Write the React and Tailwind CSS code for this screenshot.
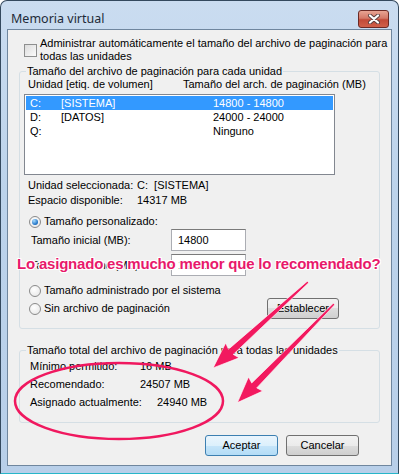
import React from 'react';

const Radio = ({ checked }) => (
  <span className="w-[12px] h-[12px] rounded-full border border-[#8a8a8a] bg-[radial-gradient(circle_at_40%_35%,#ffffff,#e4e4e4)] flex items-center justify-center shrink-0">
    {checked && (
      <span className="w-[6px] h-[6px] rounded-full bg-[radial-gradient(circle_at_35%_30%,#a8dcff,#1a6fc4_70%,#0d4f99)]" />
    )}
  </span>
);

const Button = ({ children, primary, className = '' }) => (
  <button
    className={
      'h-[21px] rounded-[3px] border text-black flex items-center justify-center ' +
      (primary
        ? 'border-[#3c7fb1] bg-[linear-gradient(to_bottom,#eaf5fd_0%,#dcf0fc_50%,#c6e5fa_50%,#b3dcf6_100%)] '
        : 'border-[#707070] bg-[linear-gradient(to_bottom,#f2f2f2_0%,#ebebeb_50%,#dddddd_50%,#cfcfcf_100%)] ') +
      className
    }
  >
    {children}
  </button>
);

const drives = [
  { unit: 'C:', label: '[SISTEMA]', size: '14800 - 14800', selected: true },
  { unit: 'D:', label: '[DATOS]', size: '24000 - 24000' },
  { unit: 'Q:', label: '', size: 'Ninguno' },
];

export default function App() {
  return (
    <div className="relative w-[399px] h-[474px] overflow-hidden bg-white text-[11px] leading-[13px] text-black whitespace-nowrap font-['Liberation_Sans',sans-serif]">
      {/* Window frame */}
      <div className="h-full flex flex-col rounded-t-[7px] border border-[#34495e] border-b-[#27b6c9] bg-[linear-gradient(to_bottom,#cadcf0,#bcd3eb_40%,#b8cfe9)] px-[6px] pb-[7px]">
        {/* Title bar */}
        <div className="h-[28px] flex items-start justify-between shrink-0">
          <span className="pl-[4px] pt-[11px] text-[12.5px] leading-[14px] text-[#1e2a38] font-['Noto_Sans',sans-serif]">Memoria virtual</span>
          <div className="mt-[9px] mr-[3px] w-[31px] h-[18px] rounded-[3px] border border-[#6b2a25] bg-[linear-gradient(to_bottom,#e8a493_0%,#d47968_45%,#c24a38_55%,#d0604a_100%)] flex items-center justify-center">
            <svg width="14" height="10" viewBox="0 0 14 10">
              <path d="M3 1.5 L11 8.5 M11 1.5 L3 8.5" stroke="#5a4040" strokeWidth="4" strokeLinecap="round" />
              <path d="M3 1.5 L11 8.5 M11 1.5 L3 8.5" stroke="#ffffff" strokeWidth="2.2" strokeLinecap="round" />
            </svg>
          </div>
        </div>

        {/* Client area */}
        <div className="flex-1 flex flex-col bg-[#f0f0f0] border border-[#6f869e]">
          <div className="mt-[7px] ml-[16px] flex items-center gap-[3px]">
            <span className="w-[13px] h-[13px] border border-[#8e8f8f] bg-[linear-gradient(135deg,#dcdcdc,#fbfbfb)] shrink-0" />
            <span>
              Administrar automáticamente el tamaño del archivo de paginación para
              <br />
              todas las unidades
            </span>
          </div>

          {/* Group 1 */}
          <fieldset className="mt-[2px] ml-[11px] w-[361px] border border-[#d5dfe5] rounded-[3px] pb-[9px]">
            <legend className="ml-[6px] px-[1px]">Tamaño del archivo de paginación para cada unidad</legend>
            <div className="flex pl-[8px]">
              <span className="w-[155px]">Unidad [etiq. de volumen]</span>
              <span>Tamaño del arch. de paginación (MB)</span>
            </div>
            <div className="mt-[3px] ml-[4px] w-[311px] h-[81px] border border-[#828790] bg-white p-[1px]">
              {drives.map((d) => (
                <div
                  key={d.unit}
                  className={
                    'h-[14px] flex items-center pl-[4px] ' +
                    (d.selected ? 'bg-[#3399ff] text-white' : '')
                  }
                >
                  <span className="w-[31px]">{d.unit}</span>
                  <span className="w-[152px]">{d.label}</span>
                  <span>{d.size}</span>
                </div>
              ))}
            </div>

            <div className="mt-[3px] pl-[8px] leading-[15px]">
              <div className="flex">
                <span className="w-[109px]">Unidad seleccionada:</span>
                <span>C:&nbsp;&nbsp;[SISTEMA]</span>
              </div>
              <div className="flex">
                <span className="w-[109px]">Espacio disponible:</span>
                <span>14317 MB</span>
              </div>
            </div>

            <div className="mt-[7px] pl-[9px] flex items-center gap-[3px]">
              <Radio checked />
              <span>Tamaño personalizado:</span>
            </div>
            <div className="mt-[1px] pl-[11px] flex items-center">
              <span className="w-[140px]">Tamaño inicial (MB):</span>
              <div className="w-[75px] h-[22px] border border-[#abadb3] border-t-[#7a7a7a] bg-white pl-[6px] flex items-center">14800</div>
            </div>
            <div className="mt-[3px] pl-[11px] flex items-center">
              <span className="w-[140px]">Tamaño máximo (MB):</span>
              <div className="w-[75px] h-[22px] border border-[#abadb3] border-t-[#7a7a7a] bg-white pl-[6px] flex items-center">14800</div>
            </div>

            <div className="mt-[8px] pl-[9px] flex items-center gap-[3px]">
              <Radio />
              <span>Tamaño administrado por el sistema</span>
            </div>
            <div className="mt-[1px] pl-[9px] pr-[40px] flex items-center">
              <Radio />
              <span className="ml-[3px]">Sin archivo de paginación</span>
              <Button className="ml-auto w-[72px]">Establecer</Button>
            </div>
          </fieldset>

          {/* Group 2 */}
          <fieldset className="mt-[15px] ml-[11px] w-[361px] border border-[#d5dfe5] rounded-[3px] pb-[11px]">
            <legend className="ml-[6px] px-[1px]">Tamaño total del archivo de paginación para todas las unidades</legend>
            <div className="pl-[10px] leading-[18px]">
              <div className="flex">
                <span className="w-[110px]">Mínimo permitido:</span>
                <span>16 MB</span>
              </div>
              <div className="flex">
                <span className="w-[110px]">Recomendado:</span>
                <span>24507 MB</span>
              </div>
              <div className="flex">
                <span className="w-[127px]">Asignado actualmente:</span>
                <span>24940 MB</span>
              </div>
            </div>
          </fieldset>

          <div className="mt-[12px] mr-[32px] flex justify-end gap-[8px]">
            <Button primary className="w-[73px]">Aceptar</Button>
            <Button className="w-[73px]">Cancelar</Button>
          </div>
        </div>
      </div>

      {/* Annotations */}
      <svg className="absolute left-0 top-0 pointer-events-none" width="399" height="474" viewBox="0 0 399 474">
        <ellipse cx="119" cy="401" rx="104" ry="38" fill="none" stroke="#f0185f" strokeWidth="2.5" />
        <g transform="translate(308 282) rotate(137.85)">
          <polygon points="0,-1 104,-3.5 102,-10 128,0 102,10 104,3.5 0,1" fill="#f2195f" stroke="#ffffff" strokeWidth="0.6" />
        </g>
        <g transform="translate(334 304) rotate(134.4)">
          <polygon points="0,-1 114,-3.5 112,-10 138,0 112,10 114,3.5 0,1" fill="#f2195f" stroke="#ffffff" strokeWidth="0.6" />
        </g>
      </svg>
      <div className="absolute left-[17px] top-[255px] font-['Liberation_Sans',sans-serif] font-bold text-[15px] leading-[18px] tracking-[-0.2px] text-[#e8196b] [text-shadow:-1px_-1px_0_#fff,1px_-1px_0_#fff,-1px_1px_0_#fff,1px_1px_0_#fff,0_-1px_0_#fff,0_1px_0_#fff,-1px_0_0_#fff,1px_0_0_#fff]">
        Lo asignado es mucho menor que lo recomendado?
      </div>
    </div>
  );
}
